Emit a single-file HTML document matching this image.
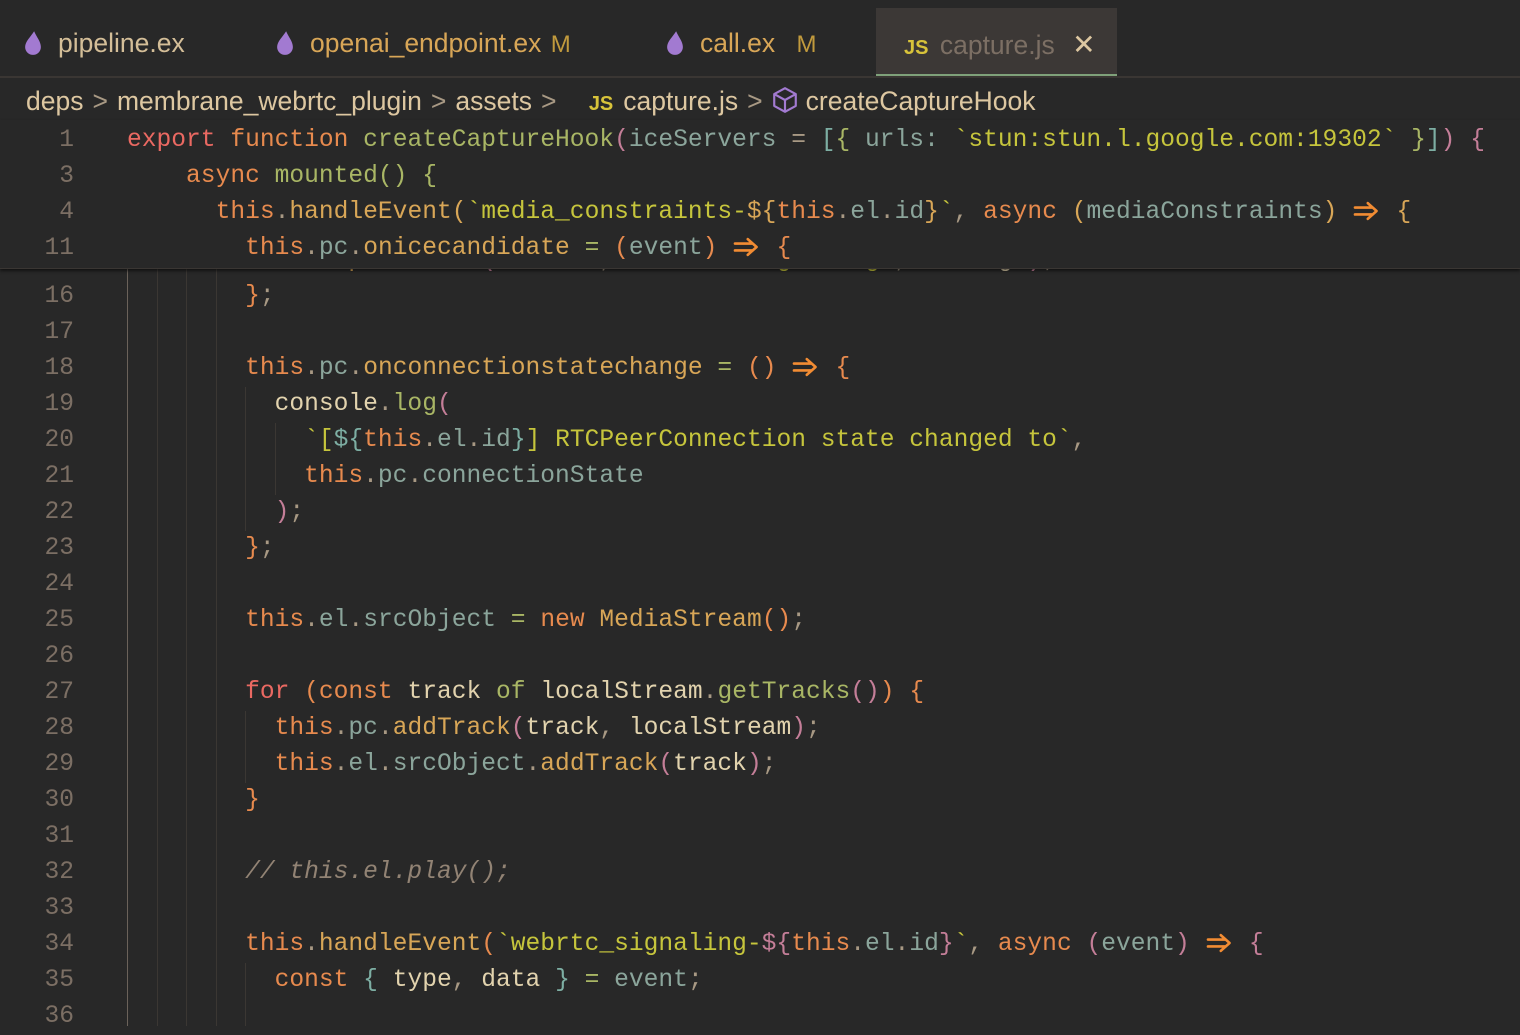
<!DOCTYPE html>
<html><head><meta charset="utf-8"><style>
html,body{margin:0;padding:0;}
body{width:1520px;height:1026px;background:#282828;overflow:hidden;position:relative;font-family:"Liberation Sans",sans-serif;}
.tabs{position:absolute;left:0;top:0;width:1520px;height:76px;border-bottom:2px solid #3a3633;}
.tab{position:absolute;top:28px;font-size:26.5px;color:#d4be98;white-space:nowrap;}
.drop{display:inline-block;width:18px;height:25px;vertical-align:-3px;margin-right:16px;}
.active{position:absolute;left:876px;top:8px;width:241px;height:68px;background:#3c3836;border-bottom:2px solid #7fa17a;box-sizing:border-box;}
.bc{position:absolute;left:26px;top:86px;font-size:26.5px;color:#ddc7a1;white-space:nowrap;}
.bc .s{color:#a89984;margin:0 9px;}
.js{color:#d8c33a;font-weight:bold;font-size:20px;}
.code{font-family:"Liberation Mono","DejaVu Sans Mono",monospace;font-size:24.6px;}
.ln{position:absolute;left:0;width:74px;text-align:right;color:#7c6f64;}
.l{position:absolute;left:127px;white-space:pre;color:#d4be98;}
.line{position:absolute;left:0;height:36px;line-height:36px;width:1520px;}
.sticky{position:absolute;left:0;top:120px;width:1520px;height:148px;background:#282828;box-shadow:0 2px 3px rgba(0,0,0,.55);z-index:3;border-bottom:1px solid #3a3633;}
.g{position:absolute;width:1px;background:#3b3733;}
.rd{color:#ea6962}.or{color:#e78a4e}.ye{color:#d8a657}.gr{color:#a9b665}.tl{color:#8ba59b}.st{color:#c6c53c}.fg{color:#e2d3ae}.pu{color:#a89984}.pk{color:#c47e98}.bl{color:#7daea3}.cm{color:#928374;font-style:italic}
.ar{display:inline-block;width:2ch;height:20px;vertical-align:-3px;}
</style></head><body>
<svg width="0" height="0" style="position:absolute"><defs><symbol id="arr" viewBox="0 0 30 20"><path d="M3 6.5H21M3 13.5H21M16 2L25 10L16 18" fill="none" stroke="#f28c33" stroke-width="2.6" stroke-linecap="round" stroke-linejoin="round"/></symbol></defs></svg>
<div class="tabs">
 <div class="tab" style="left:24px"><svg class="drop" viewBox="0 0 16 22"><path d="M9 1C6 6 1 10 1 15a7 7 0 0 0 14 0C15 10 11 6 9 1z" fill="#a27ad1"/></svg>pipeline.ex</div>
 <div class="tab" style="left:276px;color:#d8a657"><svg class="drop" viewBox="0 0 16 22"><path d="M9 1C6 6 1 10 1 15a7 7 0 0 0 14 0C15 10 11 6 9 1z" fill="#a27ad1"/></svg>openai_endpoint.ex <span style="color:#c19a3d;font-size:24px;margin-left:2px">M</span></div>
 <div class="tab" style="left:666px;color:#d8a657"><svg class="drop" viewBox="0 0 16 22"><path d="M9 1C6 6 1 10 1 15a7 7 0 0 0 14 0C15 10 11 6 9 1z" fill="#a27ad1"/></svg>call.ex <span style="color:#c19a3d;font-size:24px;margin-left:14px">M</span></div>
 <div class="active"></div>
 <div class="tab" style="left:904px;color:#7c6f64"><span class="js">JS</span> <span style="margin-left:4px">capture.js</span> <span style="color:#ddc7a1;margin-left:10px;font-size:28px">✕</span></div>
</div>
<div class="bc">deps<span class="s">&gt;</span>membrane_webrtc_plugin<span class="s">&gt;</span>assets<span class="s">&gt;</span> <span class="js" style="margin:0 10px 0 16px">JS</span>capture.js<span class="s">&gt;</span><svg width="26" height="28" viewBox="0 0 24 26" style="vertical-align:-4px;margin:0 8px 0 0"><path d="M12 2L22 7.5V18.5L12 24L2 18.5V7.5Z M2 7.5L12 13L22 7.5 M12 13V24" fill="none" stroke="#a27ad1" stroke-width="2" stroke-linejoin="round"/></svg>createCaptureHook</div>

<div class="sticky code">
 <div class="line" style="top:3px"><span class="ln">1</span><span class="l"><span class="rd">export</span> <span class="or">function</span> <span class="gr">createCaptureHook</span><span class="pk">(</span><span class="tl">iceServers</span> <span class="pu">=</span> <span class="bl">[</span><span class="gr">{</span> <span class="tl">urls:</span> <span class="st">`stun:stun.l.google.com:19302`</span> <span class="gr">}</span><span class="bl">]</span><span class="pk">)</span> <span class="pk">{</span></span></div>
 <div class="line" style="top:39px"><span class="ln">3</span><span class="l">    <span class="or">async</span> <span class="gr">mounted</span><span class="gr">()</span> <span class="gr">{</span></span></div>
 <div class="line" style="top:75px"><span class="ln">4</span><span class="l">      <span class="or">this</span><span class="pu">.</span><span class="ye">handleEvent</span><span class="ye">(</span><span class="st">`media_constraints-</span><span class="ye">${</span><span class="or">this</span><span class="pu">.</span><span class="tl">el</span><span class="pu">.</span><span class="tl">id</span><span class="ye">}</span><span class="st">`</span><span class="pu">,</span> <span class="or">async</span> <span class="ye">(</span><span class="tl">mediaConstraints</span><span class="ye">)</span> <svg class="ar"><use href="#arr"/></svg> <span class="ye">{</span></span></div>
 <div class="line" style="top:111px"><span class="ln">11</span><span class="l">        <span class="or">this</span><span class="pu">.</span><span class="tl">pc</span><span class="pu">.</span><span class="ye">onicecandidate</span> <span class="gr">=</span> <span class="or">(</span><span class="tl">event</span><span class="or">)</span> <svg class="ar"><use href="#arr"/></svg> <span class="or">{</span></span></div>
</div>

<div class="g" style="left:127px;top:268px;height:758px;background:#6b625a"></div>
<div class="g" style="left:157px;top:268px;height:758px"></div>
<div class="g" style="left:186px;top:268px;height:758px"></div>
<div class="g" style="left:216px;top:268px;height:758px"></div>
<div class="g" style="left:245px;top:387px;height:144px"></div>
<div class="g" style="left:275px;top:423px;height:72px"></div>
<div class="g" style="left:245px;top:711px;height:72px"></div>
<div class="g" style="left:245px;top:963px;height:63px"></div>

<div class="code">
 <div class="line" style="top:243px"><span class="ln">15</span><span class="l">          <span class="or">this</span><span class="pu">.</span><span class="ye">pushEvent</span><span class="pk">(</span><span class="or">this</span><span class="pu">.</span><span class="tl">el</span><span class="pu">,</span> <span class="st">`webrtc_signaling`</span><span class="pu">,</span> <span class="fg">message</span><span class="pk">)</span><span class="pu">;</span></span></div>
 <div class="line" style="top:279px"><span class="ln">16</span><span class="l">        <span class="or">}</span><span class="pu">;</span></span></div>
 <div class="line" style="top:315px"><span class="ln">17</span></div>
 <div class="line" style="top:351px"><span class="ln">18</span><span class="l">        <span class="or">this</span><span class="pu">.</span><span class="tl">pc</span><span class="pu">.</span><span class="ye">onconnectionstatechange</span> <span class="gr">=</span> <span class="or">()</span> <svg class="ar"><use href="#arr"/></svg> <span class="or">{</span></span></div>
 <div class="line" style="top:387px"><span class="ln">19</span><span class="l">          <span class="fg">console</span><span class="pu">.</span><span class="gr">log</span><span class="pk">(</span></span></div>
 <div class="line" style="top:423px"><span class="ln">20</span><span class="l">            <span class="st">`[</span><span class="bl">${</span><span class="or">this</span><span class="pu">.</span><span class="tl">el</span><span class="pu">.</span><span class="tl">id</span><span class="bl">}</span><span class="st">] RTCPeerConnection state changed to`</span><span class="pu">,</span></span></div>
 <div class="line" style="top:459px"><span class="ln">21</span><span class="l">            <span class="or">this</span><span class="pu">.</span><span class="tl">pc</span><span class="pu">.</span><span class="tl">connectionState</span></span></div>
 <div class="line" style="top:495px"><span class="ln">22</span><span class="l">          <span class="pk">)</span><span class="pu">;</span></span></div>
 <div class="line" style="top:531px"><span class="ln">23</span><span class="l">        <span class="or">}</span><span class="pu">;</span></span></div>
 <div class="line" style="top:567px"><span class="ln">24</span></div>
 <div class="line" style="top:603px"><span class="ln">25</span><span class="l">        <span class="or">this</span><span class="pu">.</span><span class="tl">el</span><span class="pu">.</span><span class="tl">srcObject</span> <span class="gr">=</span> <span class="or">new</span> <span class="ye">MediaStream</span><span class="or">()</span><span class="pu">;</span></span></div>
 <div class="line" style="top:639px"><span class="ln">26</span></div>
 <div class="line" style="top:675px"><span class="ln">27</span><span class="l">        <span class="rd">for</span> <span class="or">(</span><span class="or">const</span> <span class="fg">track</span> <span class="gr">of</span> <span class="fg">localStream</span><span class="pu">.</span><span class="gr">getTracks</span><span class="pk">()</span><span class="or">)</span> <span class="or">{</span></span></div>
 <div class="line" style="top:711px"><span class="ln">28</span><span class="l">          <span class="or">this</span><span class="pu">.</span><span class="tl">pc</span><span class="pu">.</span><span class="ye">addTrack</span><span class="pk">(</span><span class="fg">track</span><span class="pu">,</span> <span class="fg">localStream</span><span class="pk">)</span><span class="pu">;</span></span></div>
 <div class="line" style="top:747px"><span class="ln">29</span><span class="l">          <span class="or">this</span><span class="pu">.</span><span class="tl">el</span><span class="pu">.</span><span class="tl">srcObject</span><span class="pu">.</span><span class="ye">addTrack</span><span class="pk">(</span><span class="fg">track</span><span class="pk">)</span><span class="pu">;</span></span></div>
 <div class="line" style="top:783px"><span class="ln">30</span><span class="l">        <span class="or">}</span></span></div>
 <div class="line" style="top:819px"><span class="ln">31</span></div>
 <div class="line" style="top:855px"><span class="ln">32</span><span class="l">        <span class="cm">// this.el.play();</span></span></div>
 <div class="line" style="top:891px"><span class="ln">33</span></div>
 <div class="line" style="top:927px"><span class="ln">34</span><span class="l">        <span class="or">this</span><span class="pu">.</span><span class="ye">handleEvent</span><span class="or">(</span><span class="st">`webrtc_signaling-</span><span class="pk">${</span><span class="or">this</span><span class="pu">.</span><span class="tl">el</span><span class="pu">.</span><span class="tl">id</span><span class="pk">}</span><span class="st">`</span><span class="pu">,</span> <span class="or">async</span> <span class="pk">(</span><span class="tl">event</span><span class="pk">)</span> <svg class="ar"><use href="#arr"/></svg> <span class="pk">{</span></span></div>
 <div class="line" style="top:963px"><span class="ln">35</span><span class="l">          <span class="or">const</span> <span class="bl">{</span> <span class="fg">type</span><span class="pu">,</span> <span class="fg">data</span> <span class="bl">}</span> <span class="gr">=</span> <span class="tl">event</span><span class="pu">;</span></span></div>
 <div class="line" style="top:999px"><span class="ln">36</span></div>
</div>
</body></html>
